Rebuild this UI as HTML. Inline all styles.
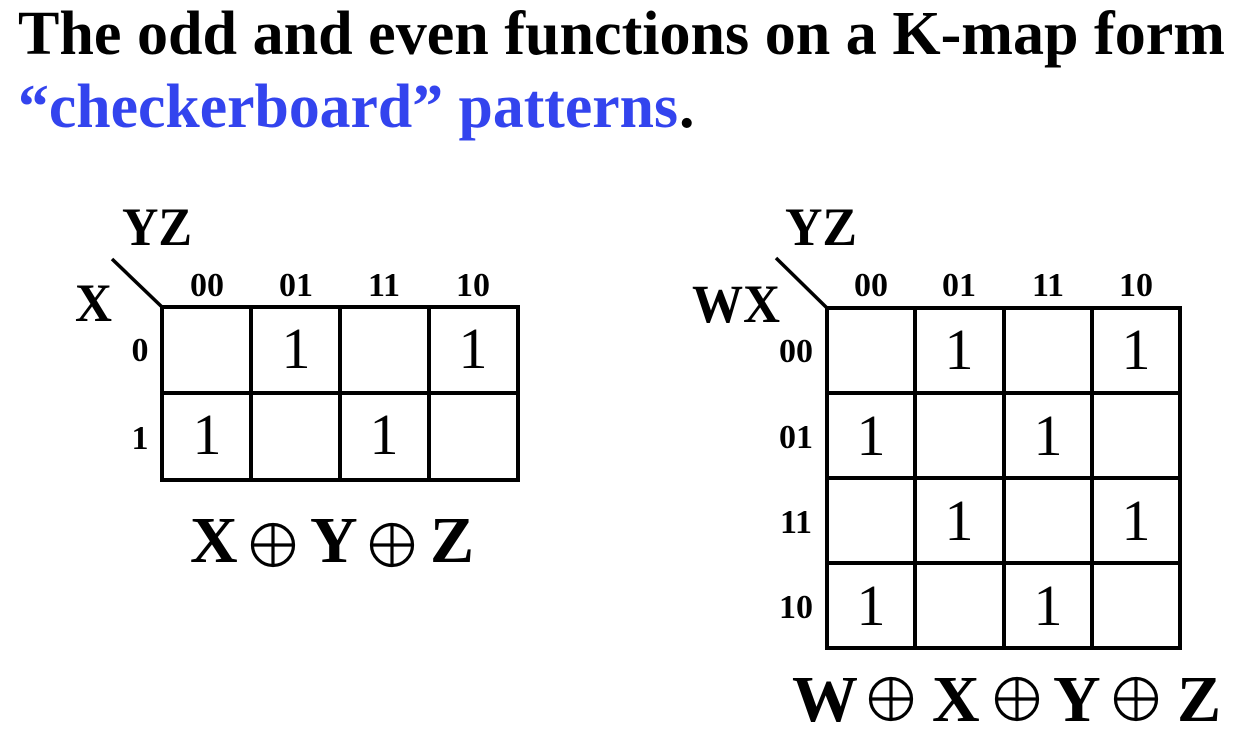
<!DOCTYPE html>
<html><head><meta charset="utf-8"><style>
html,body{margin:0;padding:0;background:#fff;}
svg{display:block;}
text{font-family:"Liberation Serif",serif;}
.b{font-weight:bold;}
</style></head><body>
<svg width="1246" height="752" viewBox="0 0 1246 752" xmlns="http://www.w3.org/2000/svg">
<defs>
<g id="xor" fill="none" stroke="#000" stroke-width="3.2">
<circle cx="0" cy="0" r="20.5"/><line x1="-20" y1="0" x2="20" y2="0"/><line x1="0" y1="-20" x2="0" y2="20"/>
</g>
</defs>
<text class="b" x="18" y="54" font-size="62" textLength="1207" lengthAdjust="spacingAndGlyphs">The odd and even functions on a K-map form</text>
<text class="b" x="18" y="127" font-size="62" fill="#3344ee" textLength="660" lengthAdjust="spacingAndGlyphs">“checkerboard” patterns</text>
<text class="b" x="679" y="127" font-size="62">.</text>

<!-- Left map -->
<g stroke="#000" stroke-width="4" fill="none">
<rect x="162" y="307" width="356" height="173"/>
<line x1="251" y1="307" x2="251" y2="480"/>
<line x1="340" y1="307" x2="340" y2="480"/>
<line x1="429" y1="307" x2="429" y2="480"/>
<line x1="162" y1="393" x2="518" y2="393"/>
<line x1="112" y1="259" x2="162" y2="307" stroke-width="3.5"/>
</g>
<text class="b" x="122" y="245" font-size="54" textLength="70" lengthAdjust="spacingAndGlyphs">YZ</text>
<text class="b" x="75" y="321" font-size="54" textLength="37" lengthAdjust="spacingAndGlyphs">X</text>
<g class="b" font-size="34" text-anchor="middle">
<text x="207" y="296">00</text><text x="296" y="296">01</text><text x="384" y="296">11</text><text x="473" y="296">10</text>
<text x="140" y="361">0</text><text x="140" y="449">1</text>
</g>
<g font-size="58" text-anchor="middle">
<text x="296" y="368">1</text><text x="473" y="368">1</text>
<text x="207" y="454">1</text><text x="384" y="454">1</text>
</g>
<g class="b" font-size="66" lengthAdjust="spacingAndGlyphs">
<text x="190" y="562" textLength="43">X</text><text x="310" y="562" textLength="45">Y</text><text x="430" y="562" textLength="42">Z</text>
</g>
<use href="#xor" x="273" y="545"/>
<use href="#xor" x="392" y="545"/>

<!-- Right map -->
<g stroke="#000" stroke-width="4" fill="none">
<rect x="827" y="308" width="353" height="340"/>
<line x1="915" y1="308" x2="915" y2="648"/>
<line x1="1004" y1="308" x2="1004" y2="648"/>
<line x1="1092" y1="308" x2="1092" y2="648"/>
<line x1="827" y1="393" x2="1180" y2="393"/>
<line x1="827" y1="478" x2="1180" y2="478"/>
<line x1="827" y1="563" x2="1180" y2="563"/>
<line x1="776" y1="258" x2="827" y2="308" stroke-width="3.5"/>
</g>
<text class="b" x="785" y="245" font-size="54" textLength="72" lengthAdjust="spacingAndGlyphs">YZ</text>
<text class="b" x="692" y="322" font-size="54" textLength="88" lengthAdjust="spacingAndGlyphs">WX</text>
<g class="b" font-size="34" text-anchor="middle">
<text x="871" y="296">00</text><text x="959" y="296">01</text><text x="1048" y="296">11</text><text x="1136" y="296">10</text>
<text x="796" y="362">00</text><text x="796" y="448">01</text><text x="796" y="533">11</text><text x="796" y="618">10</text>
</g>
<g font-size="58" text-anchor="middle">
<text x="959" y="369">1</text><text x="1136" y="369">1</text>
<text x="871" y="455">1</text><text x="1048" y="455">1</text>
<text x="959" y="540">1</text><text x="1136" y="540">1</text>
<text x="871" y="625">1</text><text x="1048" y="625">1</text>
</g>
<g class="b" font-size="66" lengthAdjust="spacingAndGlyphs">
<text x="792" y="721" textLength="60">W</text><text x="932" y="721" textLength="43">X</text><text x="1053" y="721" textLength="44">Y</text><text x="1177" y="721" textLength="38">Z</text>
</g>
<use href="#xor" x="891" y="699"/>
<use href="#xor" x="1017" y="699"/>
<use href="#xor" x="1136" y="699"/>
</svg>
</body></html>
